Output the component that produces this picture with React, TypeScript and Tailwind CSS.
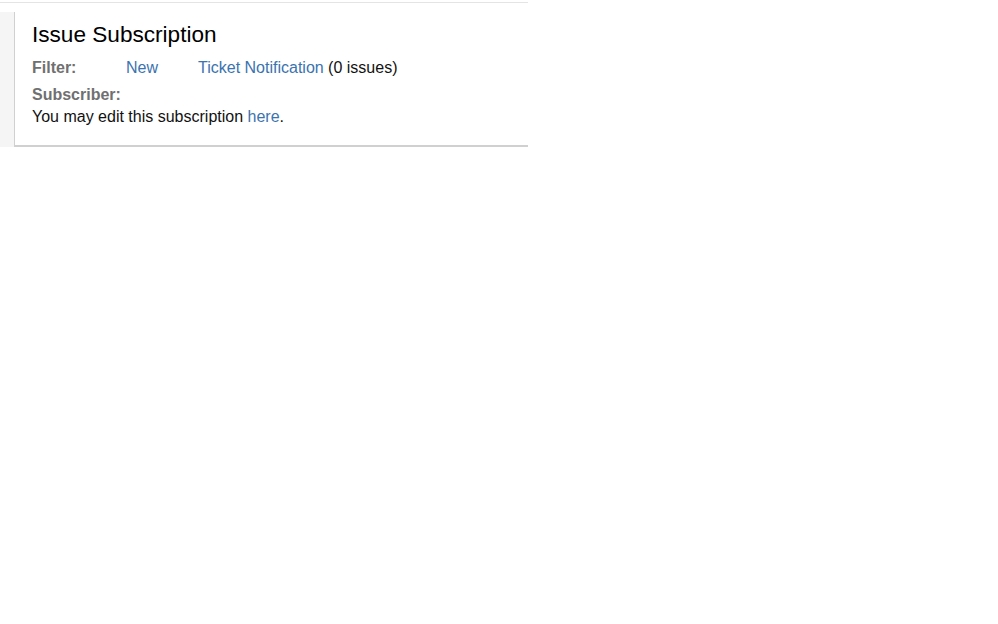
export default function App() {
  return (
    <div className="min-h-[624px] bg-white pt-[2px] font-['Liberation_Sans',Arial,sans-serif] text-[16px] text-[#111]">
      <div className="w-[528px] border-t border-[#e4e4e4]" />
      <div className="mt-[9px] flex w-[528px]">
        <div className="w-[14px] shrink-0 bg-[#f5f5f5]" />
        <div className="flex-1 border-b-2 border-l border-[#d0d0d0] pb-[18px] pl-[17px] pt-[9px]">
          <h1 className="text-[22.6px] leading-[28px] text-black">Issue Subscription</h1>
          <div className="mt-[9px] flex leading-[20px]">
            <span className="w-[94px] font-bold text-[#707070]">Filter:</span>
            <a href="#" className="w-[72px] text-[#3b73af]">New</a>
            <span>
              <a href="#" className="text-[#3b73af]">Ticket Notification</a> (0 issues)
            </span>
          </div>
          <div className="mt-[7px] leading-[20px] font-bold text-[#707070]">Subscriber:</div>
          <p className="mt-[2px] leading-[20px]">
            You may edit this subscription <a href="#" className="text-[#3b73af]">here</a>.
          </p>
        </div>
      </div>
    </div>
  );
}
